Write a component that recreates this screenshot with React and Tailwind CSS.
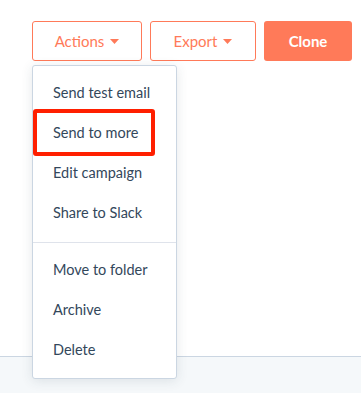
import { useState } from 'react';

const menuGroups = [
    ['Send test email', 'Send to more', 'Edit campaign', 'Share to Slack'],
    ['Move to folder', 'Archive', 'Delete'],
];

function Caret() {
    return (
        <svg width="9" height="5" viewBox="0 0 9 5" className="ml-[6px] mt-[1px]">
            <path d="M0 0 L9 0 L4.5 5 Z" fill="#ff7a59" />
        </svg>
    );
}

export default function App() {
    const [open] = useState(true);

    return (
        <div className="w-[361px] h-[393px] flex flex-col bg-white font-['Lato','Noto_Sans',sans-serif] overflow-hidden">
            {/* Header area */}
            <div className="h-[357px] shrink-0 border-b border-[#cbd6e2] bg-white">
                <div className="flex gap-2 pt-[21px] pl-[32px]">
                    <div className="relative">
                        <button className="w-[110px] h-[40px] flex items-center justify-center rounded-[3px] border border-[#ff7a59] bg-white text-[15px] text-[#ff7a59]">
                            Actions
                            <Caret />
                        </button>

                        {open && (
                            <div className="absolute left-0 top-[44px] z-10 w-[145px] rounded-[3px] border border-[#cbd6e2] bg-white pt-[7px] pb-[8px] shadow-[0_2px_12px_rgba(45,62,80,0.12)]">
                                {menuGroups.map((group, gi) => (
                                    <div key={gi} className={gi > 0 ? 'border-t border-[#dfe3eb] mt-[9px] pt-[7px]' : ''}>
                                        {group.map(label => (
                                            <div key={label} className="h-[40px] flex items-center pl-[20px] text-[14.5px] text-[#33475b] whitespace-nowrap">
                                                {label}
                                            </div>
                                        ))}
                                    </div>
                                ))}
                                {/* annotation highlight */}
                                <div className="absolute left-[0px] top-[43px] w-[122px] h-[47px] rounded-[3px] border-[4px] border-[#ff1f00]" />
                            </div>
                        )}
                    </div>

                    <button className="w-[106px] h-[40px] flex items-center justify-center rounded-[3px] border border-[#ff7a59] bg-white text-[15px] text-[#ff7a59]">
                        Export
                        <Caret />
                    </button>

                    <button className="w-[88px] h-[40px] flex items-center justify-center rounded-[3px] bg-[#ff7a59] text-[15px] font-bold text-white">
                        Clone
                    </button>
                </div>
            </div>

            {/* Footer strip */}
            <div className="flex-1 bg-[#f5f8fa]" />
        </div>
    );
}
